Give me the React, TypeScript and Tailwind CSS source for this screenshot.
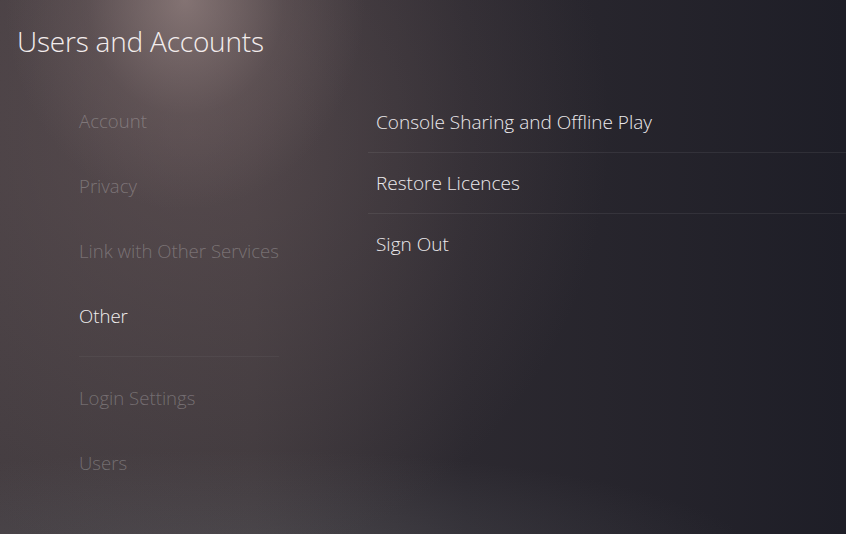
const leftItems = [
  { label: "Account", active: false },
  { label: "Privacy", active: false },
  { label: "Link with Other Services", active: false },
  { label: "Other", active: true },
]

const leftItemsBelow = ["Login Settings", "Users"]

const rightItems = ["Console Sharing and Offline Play", "Restore Licences", "Sign Out"]

function MenuRow({ label, active }: { label: string; active: boolean }) {
  return (
    <div className="h-[65px] flex items-center">
      <span className={active ? "text-[#f2f0f0]" : "text-white/25"}>{label}</span>
    </div>
  )
}

export default function App() {
  return (
    <div
      className="w-full h-[534px] overflow-hidden font-['Open_Sans',sans-serif] font-light bg-[#24232b] bg-[image:radial-gradient(ellipse_180px_210px_at_185px_0px,rgba(160,140,138,0.65),rgba(130,112,112,0.25)_55%,transparent_100%),radial-gradient(ellipse_420px_440px_at_190px_130px,rgba(112,94,96,0.45),transparent_100%),radial-gradient(ellipse_520px_110px_at_240px_560px,rgba(100,102,108,0.35),transparent_100%),linear-gradient(90deg,#433c40_0%,#3e383c_30%,#2c2930_55%,#1e1e27_100%)]"
    >
      <h1 className="pt-[21px] pl-[17px] text-[28px] leading-[40px] text-[#f3eded] tracking-[-0.2px]">
        Users and Accounts
      </h1>

      <div className="flex">
        <div className="w-[368px] pt-[27px] pl-[79px] text-[18.6px]">
          {leftItems.map((item) => (
            <MenuRow key={item.label} label={item.label} active={item.active} />
          ))}
          <div className="my-[8px] w-[200px] h-px bg-white/[0.045]" />
          {leftItemsBelow.map((label) => (
            <MenuRow key={label} label={label} active={false} />
          ))}
        </div>

        <div className="flex-1 pt-[31px] text-[19px] text-[#ebe9ec]">
          {rightItems.map((label, i) => (
            <div
              key={label}
              className={
                i < rightItems.length - 1
                  ? "h-[61px] pl-2 flex items-center border-b border-white/[0.07]"
                  : "h-[61px] pl-2 flex items-center"
              }
            >
              {label}
            </div>
          ))}
        </div>
      </div>
    </div>
  )
}
